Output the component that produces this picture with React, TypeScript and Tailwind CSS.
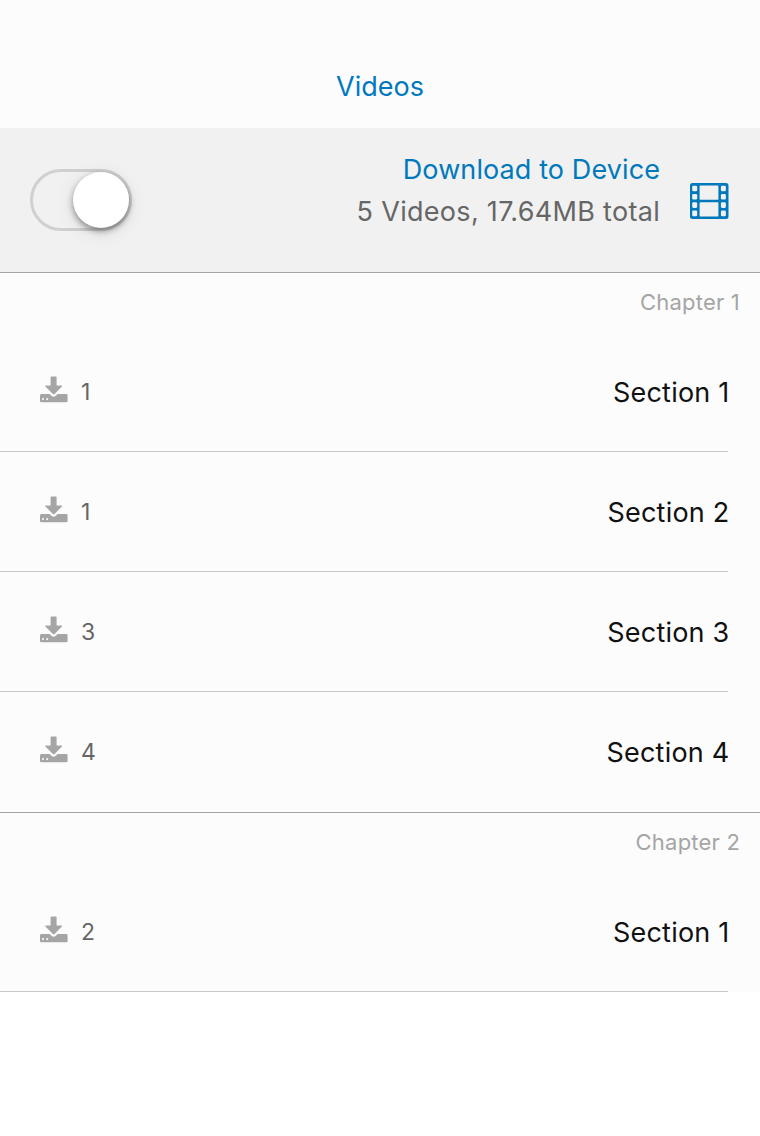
import React from "react";

function FilmIcon() {
  return (
    <svg width="39" height="36" viewBox="0 0 39 36" fill="#0079bc">
      <path fillRule="evenodd" d="M2.500 0h33.500a2.500 2.500 0 0 1 2.500 2.500v31a2.500 2.500 0 0 1-2.500 2.500H2.500A2.500 2.500 0 0 1 0 33.500v-31A2.500 2.500 0 0 1 2.500 0zM10.500 2.500q-.9 0-.9.900v12.500q0 .9.900.9h17q.9 0 .9-.9V3.400q0-.9-.9-.9zM10.500 19.300q-.9 0-.9.900v12.300q0 .9.900.9h17q.9 0 .9-.9V20.200q0-.9-.9-.9z" />
      <g fill="#f1f1f1">
        {[2.7, 11, 19.3, 27.6].map((y) => (
          <React.Fragment key={y}>
            <rect x="2.200" y={y} width="5" height="5.600" rx="1.300" />
            <rect x="30.900" y={y} width="5" height="5.600" rx="1.300" />
          </React.Fragment>
        ))}
      </g>
    </svg>
  );
}

function DownloadIcon() {
  return (
    <svg width="28" height="27" viewBox="0 0 28 27" fill="#a5a5a5">
      <path d="M11.500 .500h4.200q.9 0 .9.900V9.500h4.900q1.200 0 .4.900l-7.400 7.500q-.8.800-1.600 0L5.400 10.400q-.8-.9.400-.9h4.800V1.400q0-.9.900-.9z" />
      <path fillRule="evenodd" d="M1.400 18h8.200l2 1.900q2 1.600 4 0l2-1.900h8.600q1.400 0 1.400 1.400v5.500q0 1.400-1.400 1.400H1.400Q0 26.300 0 24.900v-5.500Q0 18 1.400 18zM3 22.100a1 1 0 1 0 .01 0zM7.200 22.100a1 1 0 1 0 .01 0z" />
    </svg>
  );
}

function Row({ count, title }: { count: number; title: string }) {
  return (
    <div className="mr-8 flex h-[120px] items-center border-b border-[#c8c7cc] pl-10">
      <div className="-mt-[4px]"><DownloadIcon /></div>
      <span className="ml-[13px] mt-[2px] text-[23px] text-[#666]">{count}</span>
      <span className="-mr-[1.5px] ml-auto mt-[3px] text-[27px] tracking-[0.22px] text-[#111]">{title}</span>
    </div>
  );
}

function Chapter({ name, rows }: { name: string; rows: number[] }) {
  return (
    <section className="border-t border-[#a4a4a6] not-last:[&>div:last-child]:border-transparent">
      <div className="flex h-[59px] items-center justify-end pr-5 text-[22px] tracking-[0.2px] text-[#a5a5a5]">{name}</div>
      {rows.map((count, i) => <Row key={i} count={count} title={`Section ${i + 1}`} />)}
    </section>
  );
}

export default function App() {
  return (
    <main className="h-[1136px] bg-white font-['Inter',sans-serif]">
      <div className="bg-[#fcfcfc]">
        <header className="flex h-32 items-end justify-center pb-[21px] text-[27px] text-[#0079bc]">Videos</header>
        <div className="flex h-36 items-center bg-[#f1f1f1] pl-[30px] pr-[31px]">
          <div className="flex h-[62px] w-[102px] items-center justify-end rounded-full border-[3px] border-[#d0d0d0]">
            <span className="size-14 rounded-full bg-white shadow-[0_3px_6px_rgba(0,0,0,0.4),0_4px_20px_rgba(0,0,0,0.1)]" />
          </div>
          <div className="-mt-[18px] ml-auto text-right text-[27px] leading-[42px]">
            <div className="tracking-[0.1px] text-[#0079bc]">Download to Device</div>
            <div className="tracking-[0.3px] text-[#666]">5 Videos, 17.64MB total</div>
          </div>
          <div className="ml-[30px] mt-[2px]"><FilmIcon /></div>
        </div>
        <Chapter name="Chapter 1" rows={[1, 1, 3, 4]} />
        <Chapter name="Chapter 2" rows={[2]} />
      </div>
    </main>
  );
}
